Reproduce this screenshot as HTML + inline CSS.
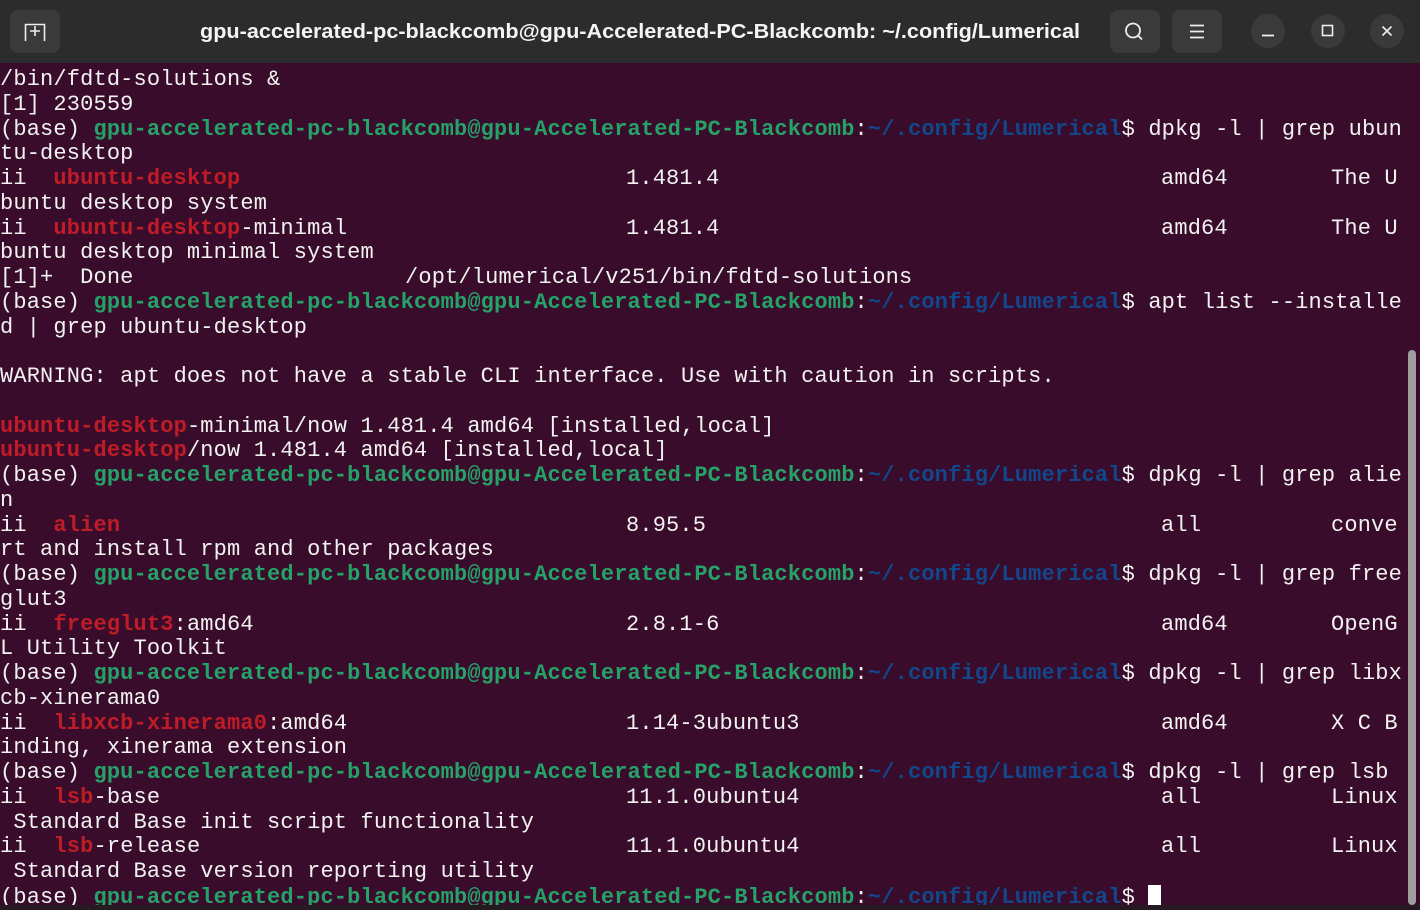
<!DOCTYPE html>
<html><head><meta charset="utf-8"><style>
*{margin:0;padding:0;box-sizing:border-box}
html,body{width:1420px;height:910px;overflow:hidden}
body{background:#380c2a;position:relative;font-family:"Liberation Mono",monospace}
#tb{position:absolute;left:0;top:0;width:1420px;height:63px;background:#2c2c2c}
.btn{position:absolute;background:#3a3a3a;border-radius:8px}
.cir{position:absolute;width:34px;height:34px;border-radius:50%;background:#3a3a3a;top:14px}
#term{position:absolute;left:0;top:68px;font-size:22px;letter-spacing:0.15px;color:#f2f2f2}
.l{position:relative;height:24.75px;line-height:24.75px;white-space:pre}
.l i{position:absolute;font-style:normal;top:0}
.c48{left:626px}.c89{left:1161px}.c102{left:1331px}.c31{left:405px}
.g{color:#26a269;font-weight:bold}
.b{color:#12488b;font-weight:bold}
.r{color:#c01c28;font-weight:bold}
#sb{position:absolute;left:1408px;top:350px;width:8px;height:555px;background:#9e9e9e;border-radius:4px}
#bot{position:absolute;left:0;top:905px;width:1420px;height:5px;background:#241a20}
</style></head><body>
<div id="tb">
 <div class="btn" style="left:10px;top:10px;width:50px;height:43px">
  <svg width="50" height="43" viewBox="0 0 50 43"><path d="M25 26 V16 M20 21 H30" stroke="#eee" stroke-width="1.6" fill="none"/><path d="M15.5 31 V14.5 H34.5 V31" stroke="#eee" stroke-width="1.6" fill="none"/></svg>
 </div>
 <svg style="position:absolute;left:0;top:0" width="1420" height="63"><text x="200" y="38" textLength="880" lengthAdjust="spacingAndGlyphs" font-family="Liberation Sans, sans-serif" font-weight="bold" font-size="20" fill="#f5f5f5">gpu-accelerated-pc-blackcomb@gpu-Accelerated-PC-Blackcomb: ~/.config/Lumerical</text></svg>
 <div class="btn" style="left:1110px;top:10px;width:50px;height:43px">
  <svg width="50" height="43" viewBox="0 0 50 43"><circle cx="23" cy="20.5" r="7" stroke="#eee" stroke-width="1.8" fill="none"/><path d="M28 25.5 L32 29.5" stroke="#eee" stroke-width="1.8"/></svg>
 </div>
 <div class="btn" style="left:1172px;top:10px;width:50px;height:43px">
  <svg width="50" height="43" viewBox="0 0 50 43"><path d="M18 15.5 H32 M18 21.5 H32 M18 27.5 H32" stroke="#eee" stroke-width="1.8"/></svg>
 </div>
 <div class="cir" style="left:1251px"><svg width="34" height="34"><path d="M11 21.5 H23" stroke="#eee" stroke-width="1.8"/></svg></div>
 <div class="cir" style="left:1311px"><svg width="34" height="34"><rect x="11.5" y="11.5" width="10" height="10" stroke="#eee" stroke-width="1.6" fill="none"/></svg></div>
 <div class="cir" style="left:1370px"><svg width="34" height="34"><path d="M12.5 12.5 L21.5 21.5 M21.5 12.5 L12.5 21.5" stroke="#eee" stroke-width="1.6"/></svg></div>
</div>
<div id="term"><div class="l">/bin/fdtd-solutions &amp;</div><div class="l">[1] 230559</div><div class="l">(base) <span class="g">gpu-accelerated-pc-blackcomb@gpu-Accelerated-PC-Blackcomb</span>:<span class="b">~/.config/Lumerical</span>$ dpkg -l | grep ubun</div><div class="l">tu-desktop</div><div class="l">ii  <span class="r">ubuntu-desktop</span><i class="c48">1.481.4</i><i class="c89">amd64</i><i class="c102">The U</i></div><div class="l">buntu desktop system</div><div class="l">ii  <span class="r">ubuntu-desktop</span>-minimal<i class="c48">1.481.4</i><i class="c89">amd64</i><i class="c102">The U</i></div><div class="l">buntu desktop minimal system</div><div class="l">[1]+  Done<i class="c31">/opt/lumerical/v251/bin/fdtd-solutions</i></div><div class="l">(base) <span class="g">gpu-accelerated-pc-blackcomb@gpu-Accelerated-PC-Blackcomb</span>:<span class="b">~/.config/Lumerical</span>$ apt list --installe</div><div class="l">d | grep ubuntu-desktop</div><div class="l"> </div><div class="l">WARNING: apt does not have a stable CLI interface. Use with caution in scripts.</div><div class="l"> </div><div class="l"><span class="r">ubuntu-desktop</span>-minimal/now 1.481.4 amd64 [installed,local]</div><div class="l"><span class="r">ubuntu-desktop</span>/now 1.481.4 amd64 [installed,local]</div><div class="l">(base) <span class="g">gpu-accelerated-pc-blackcomb@gpu-Accelerated-PC-Blackcomb</span>:<span class="b">~/.config/Lumerical</span>$ dpkg -l | grep alie</div><div class="l">n</div><div class="l">ii  <span class="r">alien</span><i class="c48">8.95.5</i><i class="c89">all</i><i class="c102">conve</i></div><div class="l">rt and install rpm and other packages</div><div class="l">(base) <span class="g">gpu-accelerated-pc-blackcomb@gpu-Accelerated-PC-Blackcomb</span>:<span class="b">~/.config/Lumerical</span>$ dpkg -l | grep free</div><div class="l">glut3</div><div class="l">ii  <span class="r">freeglut3</span>:amd64<i class="c48">2.8.1-6</i><i class="c89">amd64</i><i class="c102">OpenG</i></div><div class="l">L Utility Toolkit</div><div class="l">(base) <span class="g">gpu-accelerated-pc-blackcomb@gpu-Accelerated-PC-Blackcomb</span>:<span class="b">~/.config/Lumerical</span>$ dpkg -l | grep libx</div><div class="l">cb-xinerama0</div><div class="l">ii  <span class="r">libxcb-xinerama0</span>:amd64<i class="c48">1.14-3ubuntu3</i><i class="c89">amd64</i><i class="c102">X C B</i></div><div class="l">inding, xinerama extension</div><div class="l">(base) <span class="g">gpu-accelerated-pc-blackcomb@gpu-Accelerated-PC-Blackcomb</span>:<span class="b">~/.config/Lumerical</span>$ dpkg -l | grep lsb</div><div class="l">ii  <span class="r">lsb</span>-base<i class="c48">11.1.0ubuntu4</i><i class="c89">all</i><i class="c102">Linux</i></div><div class="l"> Standard Base init script functionality</div><div class="l">ii  <span class="r">lsb</span>-release<i class="c48">11.1.0ubuntu4</i><i class="c89">all</i><i class="c102">Linux</i></div><div class="l"> Standard Base version reporting utility</div><div class="l">(base) <span class="g">gpu-accelerated-pc-blackcomb@gpu-Accelerated-PC-Blackcomb</span>:<span class="b">~/.config/Lumerical</span>$ <span style="background:#fff;display:inline-block;width:13px;height:24px;vertical-align:middle"></span></div></div>
<div id="sb"></div>
<div id="bot"></div>
</body></html>
